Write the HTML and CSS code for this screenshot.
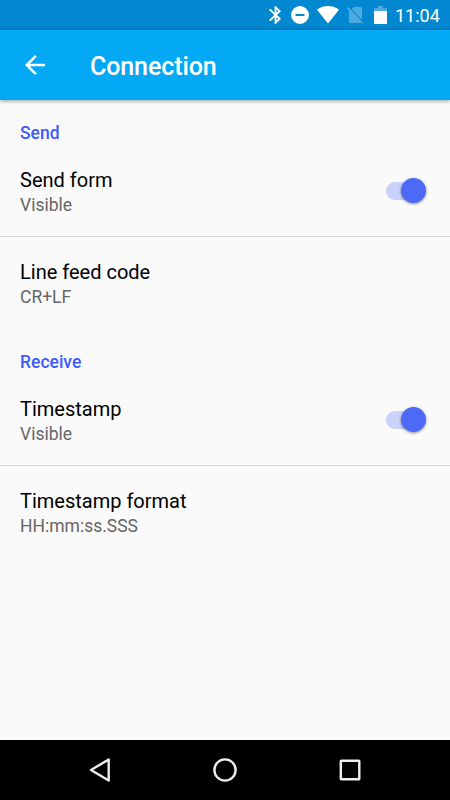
FILE: index.html
```
<!DOCTYPE html>
<html lang="en">
<head>
    <meta charset="UTF-8">
    <meta name="viewport" content="width=device-width, initial-scale=1.0">
    <title>Connection</title>
    <link rel="stylesheet" href="styles.css">
</head>
<body>
    <div class="status-bar">
        <svg class="bluetooth" width="12" height="18" viewBox="5 2 12.7 20" preserveAspectRatio="none"><path d="M17.71 7.71L12 2h-1v7.59L6.41 5 5 6.41 10.59 12 5 17.59 6.41 19 11 14.41V22h1l5.71-5.71-4.3-4.29 4.3-4.29zM13 5.83l1.88 1.88L13 9.59V5.83zm1.88 10.46L13 18.17v-3.76l1.88 1.88z"/></svg>
        <svg class="dnd" width="18" height="18" viewBox="0 0 18 18"><path fill-rule="evenodd" d="M9 0a9 9 0 1 0 0 18A9 9 0 0 0 9 0zM4.5 8h9v2h-9z"/></svg>
        <svg class="wifi" width="22" height="18" viewBox="0 0 22 18"><path d="M11 17.6L22 3.7C21.5 3.3 17.3 0 11 0S.5 3.3 0 3.7z"/></svg>
        <svg class="sim" width="16" height="18" viewBox="0 0 16 18"><path d="M15 2.5c0-.8-.6-1.5-1.4-1.5H7L4.7 3.3 15 14zM1.2 1L0 2.2l2 2.1v11.2c0 .8.7 1.5 1.5 1.5h10.2c.3 0 .5-.1.7-.2l1 1.2L16 16.8z"/></svg>
        <svg class="battery" width="13" height="18" viewBox="0 0 13 18"><path class="battery-empty" d="M0 5V2h4V0h5v2h4v3z"/><path d="M0 5h13v13H0z"/></svg>
        <span class="clock">11:04</span>
    </div>
    <div class="app-bar">
        <svg class="back-arrow" width="20" height="20" viewBox="4 4 16 16"><path d="M20 11H7.83l5.59-5.59L12 4l-8 8 8 8 1.41-1.41L7.83 13H20v-2z"/></svg>
        <h1>Connection</h1>
    </div>
    <div class="content">
        <h2>Send</h2>
        <div class="item divider">
            <div class="item-text">
                <div class="item-title">Send form</div>
                <div class="item-summary">Visible</div>
            </div>
            <div class="switch"><div class="thumb"></div></div>
        </div>
        <div class="item">
            <div class="item-text">
                <div class="item-title">Line feed code</div>
                <div class="item-summary">CR+LF</div>
            </div>
        </div>
        <h2>Receive</h2>
        <div class="item divider">
            <div class="item-text">
                <div class="item-title">Timestamp</div>
                <div class="item-summary">Visible</div>
            </div>
            <div class="switch"><div class="thumb"></div></div>
        </div>
        <div class="item">
            <div class="item-text">
                <div class="item-title">Timestamp format</div>
                <div class="item-summary">HH:mm:ss.SSS</div>
            </div>
        </div>
    </div>
    <div class="nav-bar">
        <svg width="26" height="26" viewBox="0 0 26 26"><path d="M21.7 2.5v21L4 13z"/></svg>
        <svg width="26" height="26" viewBox="0 0 26 26"><circle cx="13" cy="13" r="10.6"/></svg>
        <svg width="26" height="26" viewBox="0 0 26 26"><rect x="3.8" y="3.8" width="18.5" height="18.5" rx=".5"/></svg>
    </div>
</body>
</html>
```
FILE: styles.css
```
* {
    box-sizing: border-box;
}
body {
    font-family: Roboto, sans-serif;
    margin: 0;
    height: 800px;
    display: flex;
    flex-direction: column;
    background-color: #fafafa;
    overflow: hidden;
}
svg {
    display: block;
    flex: none;
}
.status-bar {
    height: 30px;
    padding: 0 8px 0 269px;
    display: flex;
    align-items: center;
    background: linear-gradient(#0288d1 26px, #027dc0 29px, #0272b0 30px);
    fill: #fff;
}
.dnd {
    margin-left: 10px;
}
.wifi {
    margin-left: 8px;
}
.sim {
    margin-left: 8px;
    fill: #4fabdf;
}
.battery {
    margin-left: 11px;
}
.battery-empty {
    fill: #4fabdf;
}
.clock {
    margin-left: 8px;
    padding-top: 2px;
    font-size: 18px;
    line-height: 28px;
    color: #fff;
}
.app-bar {
    height: 70px;
    padding-left: 25px;
    display: flex;
    align-items: center;
    background-color: #03a9f4;
    box-shadow: 0 1px 4px rgba(0, 0, 0, 0.4);
    clip-path: inset(0 0 -8px 0);
    fill: #fff;
}
h1 {
    margin: 4px 0 0 45px;
    font-size: 25px;
    font-weight: 500;
    line-height: 30px;
    letter-spacing: -0.1px;
    color: #fff;
}
.content {
    flex: 1;
}
h2 {
    margin: 0;
    height: 45px;
    padding: 23px 20px 0;
    font-size: 17.5px;
    font-weight: 500;
    line-height: 21px;
    color: #3d5afe;
}
.item {
    height: 92px;
    padding: 0 24px 0 20px;
    display: flex;
    align-items: center;
    justify-content: space-between;
}
.divider {
    border-bottom: 1px solid #d5d5d5;
}
.item-text {
    padding-top: 4px;
}
.item-title {
    font-size: 20px;
    line-height: 25px;
    color: #000;
}
.item-summary {
    font-size: 17.5px;
    line-height: 25px;
    color: #666;
}
.switch {
    width: 40px;
    height: 18px;
    display: flex;
    align-items: center;
    justify-content: flex-end;
    background: linear-gradient(#cad2fb, #cad2fb) left / 30px 18px no-repeat;
    border-radius: 9px;
}
.thumb {
    width: 25px;
    height: 25px;
    flex: none;
    border-radius: 50%;
    background-color: #4d69f8;
    box-shadow: 0 1px 3px rgba(0, 0, 0, 0.45);
}
.nav-bar {
    height: 60px;
    display: flex;
    align-items: center;
    justify-content: center;
    gap: 99px;
    background-color: #000;
    fill: none;
    stroke: #eee;
    stroke-width: 2.4;
    stroke-linejoin: round;
}
```
